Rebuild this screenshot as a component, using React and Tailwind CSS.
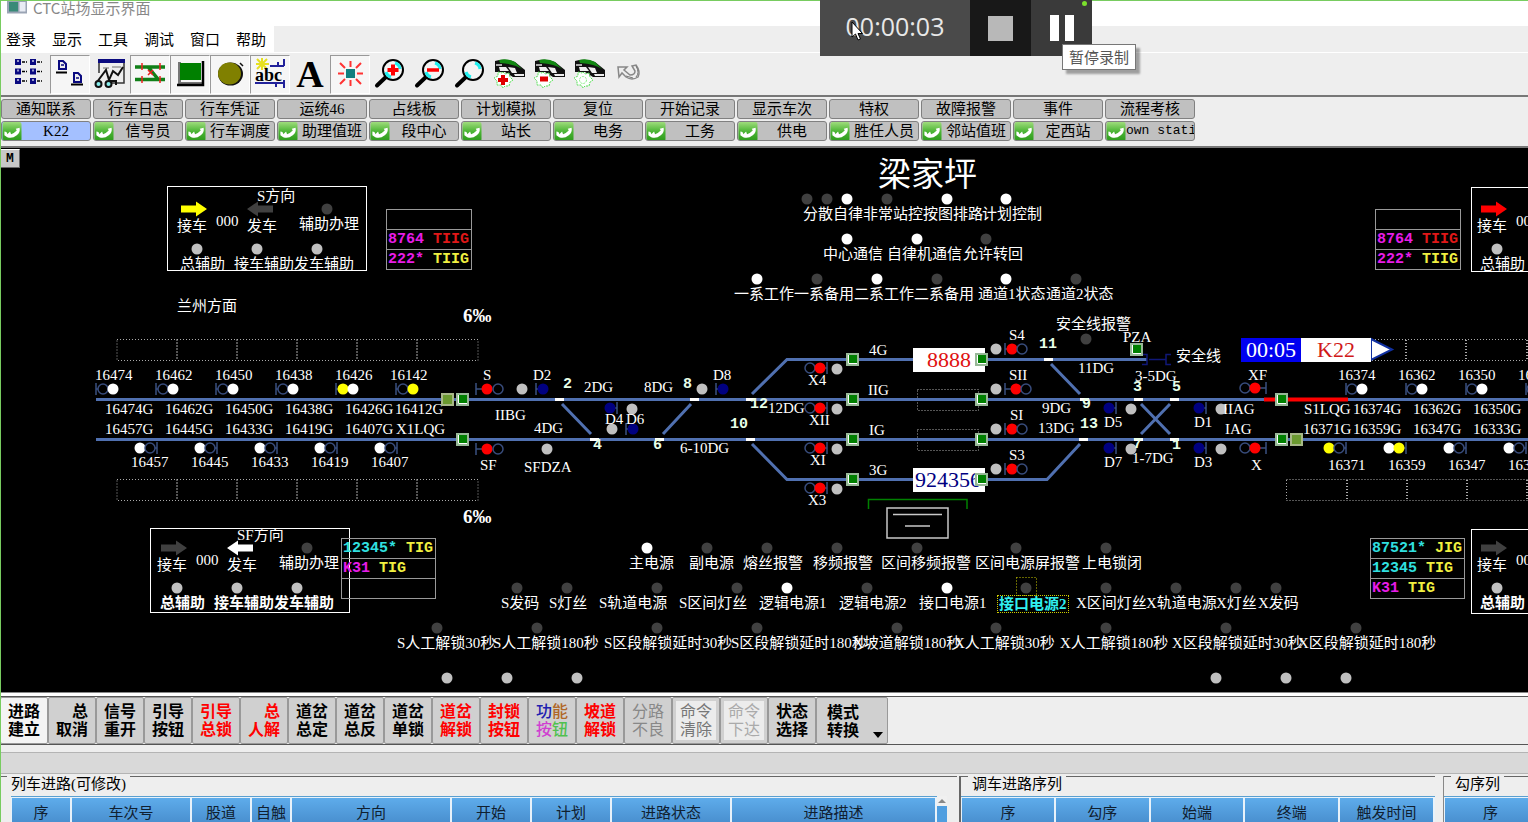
import React from "react";

const CJK = "font-['Liberation_Serif','Noto_Sans_CJK_SC',serif]";
const UI = "font-['Noto_Sans_CJK_SC',sans-serif]";

/* ---------- tool bar icons ---------- */

const Magnifier = ({ sign }) => (
  <svg viewBox="0 0 32 32" className="h-8 w-8">
    <path d="M13 18 3 27.500" stroke="#000" strokeWidth="4" strokeLinecap="round" />
    <circle cx="19" cy="12" r="10" fill="#f4f4f4" stroke="#000" strokeWidth="2" />
    <path d="M21 5a7 7 0 0 1 5 6M12 14a7 7 0 0 0 5 5" stroke="#2ee" strokeWidth="3" fill="none" />
    {sign === "+" && <path d="M19 6.500v11M13.500 12h11" stroke="#f00" strokeWidth="4" />}
    {sign === "-" && <path d="M13 12h12" stroke="#f00" strokeWidth="3.5" />}
  </svg>
);

const Train = ({ sign }) => (
  <svg viewBox="0 0 32 32" className="h-8 w-8">
    <path d="M1 3q10-3 20 1l10 8v7H19l-8-5H1z" fill="#111" />
    <path d="M5 2q9-2 16 2l7 7q-7-5-22-6z" fill="#118811" />
    <path d="M5 9h7l3 4H6zM14 9l7 1 2 5h-5zM20 16h10v2h-9z" fill="#eee" />
    <path d="M2 7h6" stroke="#aaa" strokeWidth="2" />
    <path d="m9 14 2 2 4-1 1 4 3 3-3 2-1 4-4 0-2 2-2-3-4 0v-4l-3-3 4-2v-4l4 1z" fill="#fff" stroke="#58e058" strokeDasharray="2 1" />
    {sign === "+" && <path d="M9 17v10M4 22h10" stroke="#e00000" strokeWidth="4" />}
    {sign === "-" && <path d="M6 21h8" stroke="#e00000" strokeWidth="5" />}
    {!sign && <circle cx="9" cy="22" r="3.5" fill="none" stroke="#8e8" strokeDasharray="2 1" />}
  </svg>
);

const toolIcons = [
  {
    name: "多站",
    art: (
      <svg viewBox="0 0 32 32" className="h-8 w-8">
        {[1, 10.5, 20].map((y) => (
          <g key={y}>
            <path d={`M1 ${y}h6v6h-6zM16 ${y}h6v6h-6z`} fill="#0a0a80" />
            <path d={`M3 ${y + 1}h2v2h-2zM18 ${y + 1}h2v2h-2z`} fill="#99c" />
            <path d={`M8 ${y + 3}h5M23 ${y + 3}h5`} stroke="#000" strokeWidth="1.5" strokeDasharray="3 1" />
          </g>
        ))}
      </svg>
    ),
  },
  {
    name: "单站",
    on: true,
    art: (
      <svg viewBox="0 0 32 32" className="h-8 w-8">
        <path d="M5 3h4l3 3v5H5zM20 15h4l3 3v6h-7z" fill="#eee" stroke="#0a0a80" strokeWidth="2" />
        <path d="M7 7h3M22 20h3" stroke="#0a0a80" strokeWidth="1.5" />
        <path d="M2 14.5h11M17 26.5h12" stroke="#000" strokeWidth="2" />
      </svg>
    ),
  },
  {
    name: "查看",
    art: (
      <svg viewBox="0 0 32 32" className="h-8 w-8">
        <path d="M5 3h25v22H14M5 3v12" fill="none" stroke="#333" strokeWidth="1.5" />
        <path d="M4 1h27v4H4z" fill="#0a0a80" />
        <path d="M9 10h6M18 9h9" stroke="#999" strokeWidth="1.5" />
        <path d="m3 24 9-12 3 10 4-9 5 4 5-8M14 23h8v4" fill="none" stroke="#111" strokeWidth="2" />
        <circle cx="4.500" cy="26" r="3" fill="#8ee" stroke="#111" strokeWidth="2" />
        <circle cx="14.500" cy="26" r="3" fill="#8ee" stroke="#111" strokeWidth="2" />
      </svg>
    ),
  },
  {
    name: "道岔",
    on: true,
    art: (
      <svg viewBox="0 0 32 32" className="h-8 w-8">
        <path d="M1 9h30M1 21.500h30M8 9h6l10 12" stroke="#118018" strokeWidth="3.500" fill="none" />
        <path d="M8 5v7M26 5v7M8 18v7M26 18v7M14 12l5 5M19 12l-5 5" stroke="#e22" strokeWidth="1.500" />
      </svg>
    ),
  },
  {
    name: "按钮",
    on: true,
    art: (
      <svg viewBox="0 0 32 32" className="h-8 w-8">
        <path d="M4 27V4h3v20h22v3z" fill="#777" />
        <path d="M29 3v24H3" fill="none" stroke="#000" strokeWidth="2.500" />
        <path d="M6 5h21v17H6z" fill="#008000" />
      </svg>
    ),
  },
  {
    name: "表示灯",
    on: true,
    art: (
      <svg viewBox="0 0 32 32" className="h-8 w-8">
        <ellipse cx="16.500" cy="16" rx="12.500" ry="11.500" fill="#111" />
        <ellipse cx="15.500" cy="15.500" rx="11.500" ry="11" fill="#808000" />
        <path d="M26 5l3 3" stroke="#111" strokeWidth="1.500" />
      </svg>
    ),
  },
  {
    name: "文字标注",
    on: true,
    art: (
      <span className="relative block h-8 w-8 overflow-hidden">
        <svg viewBox="0 0 32 32" className="absolute inset-0 h-8 w-8">
          <path d="M16 8h14M1 25h29M24 4v4M30 1v7M22 26v3M30 22v8" stroke="#22229a" strokeWidth="2" />
          <path d="M8 0v12M2 6h13M3 1l10 10M13 1 3 11" stroke="#e6e020" strokeWidth="2" />
        </svg>
        <span className="absolute left-px top-2 font-['Liberation_Serif',serif] text-[18px] font-bold leading-[18px] text-black">abc</span>
      </span>
    ),
  },
  {
    name: "字体",
    art: <span className="font-['Liberation_Serif',serif] text-[38px] font-bold leading-8 text-black">A</span>,
  },
  {
    name: "闪烁",
    on: true,
    art: (
      <svg viewBox="0 0 32 32" className="h-8 w-8">
        <path d="M12 11h9v9h-9z" fill="#108080" />
        <path d="M16.500 3v6M16.500 22v6M4 15.500h6M23 15.500h6M6 5l5 5M27 5l-5 5M6 26l5-5M27 26l-5-5" stroke="#f33" strokeWidth="2" />
      </svg>
    ),
  },
  { name: "放大", art: <Magnifier sign="+" /> },
  { name: "缩小", art: <Magnifier sign="-" /> },
  { name: "还原", art: <Magnifier /> },
  { name: "增加列车", art: <Train sign="+" /> },
  { name: "删除列车", art: <Train sign="-" /> },
  { name: "列车", art: <Train /> },
  {
    name: "撤销",
    art: (
      <svg viewBox="0 0 32 32" className="h-8 w-8">
        <path d="m4 9h9l-3 3 6 5q5 0 5-4l-3-5 4-1q5 7 2 12-6 4-12 0l-4-4-3 4z" fill="#eee" stroke="#888" strokeWidth="1.500" />
        <path d="m12 18 7 2M22 8q4 7 0 11" stroke="#777" fill="none" />
      </svg>
    ),
  },
];

const PhoneIcon = () => (
  <svg viewBox="0 0 20 20" className="h-[19px] w-5 shrink-0">
    <defs>
      <linearGradient id="phone" x1="0" y1="0" x2="0" y2="1">
        <stop offset="0" stopColor="#9fdc7c" />
        <stop offset="0.5" stopColor="#4cb535" />
        <stop offset="1" stopColor="#2c9a1c" />
      </linearGradient>
    </defs>
    <rect width="20" height="20" rx="2" fill="url(#phone)" />
    <path d="M2 10q3 0 3 3l3-3 1 3q3-1 6-4l-1-2 4-1q1 5-3 8-5 4-10 2l-3-2z" fill="#fff" />
  </svg>
);

const menus = ["登录", "显示", "工具", "调试", "窗口", "帮助"];
const rowOne = ["通知联系", "行车日志", "行车凭证", "运统46", "占线板", "计划模拟", "复位", "开始记录", "显示车次", "特权", "故障报警", "事件", "流程考核"];
const rowTwo = ["K22", "信号员", "行车调度", "助理值班", "段中心", "站长", "电务", "工务", "供电", "胜任人员", "邻站值班", "定西站", "own stati"];

/* ---------- station diagram ---------- */

// The diagram's own coordinate system starts at this y.
const TOP = 148;
const RAIL = "#5070b0";
const DIM = "#404040";
const GREY = "#c0c0c0";
const NAVY = "#000080";

const Text = ({ x, y, children, className = "text-[15px] text-white" }) => (
  <span className={`absolute whitespace-nowrap leading-5 ${className}`} style={{ left: x, top: y - TOP - 10 }}>
    {children}
  </span>
);

const labels = [
  ["兰州方面", 177, 306],
  ["16474", 95, 375], ["16462", 155, 375], ["16450", 215, 375], ["16438", 275, 375], ["16426", 335, 375], ["16142", 390, 375],
  ["16474G", 105, 409], ["16462G", 165, 409], ["16450G", 225, 409], ["16438G", 285, 409], ["16426G", 345, 409], ["16412G", 395, 409],
  ["16457G", 105, 429], ["16445G", 165, 429], ["16433G", 225, 429], ["16419G", 285, 429], ["16407G", 345, 429], ["X1LQG", 396, 429],
  ["16457", 131, 462], ["16445", 191, 462], ["16433", 251, 462], ["16419", 311, 462], ["16407", 371, 462],
  ["S", 483, 375], ["SF", 480, 465], ["D2", 533, 375], ["2DG", 584, 387], ["8DG", 644, 387], ["D8", 713, 375],
  ["IIBG", 495, 415], ["4DG", 534, 428], ["D4", 605, 419], ["D6", 626, 419], ["SFDZA", 524, 467], ["6-10DG", 680, 448],
  ["12DG", 768, 408], ["4G", 869, 350], ["IIG", 868, 390], ["IG", 869, 430], ["3G", 869, 470],
  ["X4", 808, 380], ["XII", 809, 420], ["XI", 810, 460], ["X3", 808, 500],
  ["S4", 1009, 335], ["SII", 1009, 375], ["SI", 1010, 415], ["S3", 1009, 455],
  ["安全线报警", 1056, 324], ["PZA", 1123, 337], ["安全线", 1176, 356], ["11DG", 1078, 368], ["9DG", 1042, 408], ["13DG", 1038, 428],
  ["3-5DG", 1135, 376], ["1-7DG", 1132, 458], ["D5", 1104, 422], ["D7", 1104, 462], ["D1", 1194, 422], ["D3", 1194, 462],
  ["IIAG", 1223, 409], ["IAG", 1225, 429], ["XF", 1248, 375], ["X", 1251, 465],
  ["16374", 1338, 375], ["16362", 1398, 375], ["16350", 1458, 375], ["16338", 1518, 375],
  ["S1LQG", 1304, 409], ["16374G", 1353, 409], ["16362G", 1413, 409], ["16350G", 1473, 409],
  ["16371G", 1303, 429], ["16359G", 1353, 429], ["16347G", 1413, 429], ["16333G", 1473, 429],
  ["16371", 1328, 465], ["16359", 1388, 465], ["16347", 1448, 465], ["16333", 1508, 465],
  ["分散自律", 803, 214], ["非常站控", 863, 214], ["按图排路", 923, 214], ["计划控制", 982, 214],
  ["中心通信", 823, 254], ["自律机通信", 887, 254], ["允许转回", 963, 254],
  ["一系工作", 734, 294], ["一系备用", 794, 294], ["二系工作", 854, 294], ["二系备用", 914, 294], ["通道1状态", 978, 294], ["通道2状态", 1046, 294],
  ["主电源", 629, 563], ["副电源", 689, 563], ["熔丝报警", 743, 563], ["移频报警", 813, 563], ["区间移频报警", 881, 563], ["区间电源屏报警", 975, 563], ["上电锁闭", 1082, 563],
  ["S发码", 501, 603], ["S灯丝", 549, 603], ["S轨道电源", 599, 603], ["S区间灯丝", 679, 603], ["逻辑电源1", 759, 603], ["逻辑电源2", 839, 603], ["接口电源1", 919, 603],
  ["X区间灯丝", 1076, 603], ["X轨道电源", 1146, 603], ["X灯丝", 1216, 603], ["X发码", 1258, 603],
  ["S人工解锁30秒", 397, 643], ["S人工解锁180秒", 493, 643], ["S区段解锁延时30秒", 604, 643], ["S区段解锁延时180秒", 731, 643],
  ["X坡道解锁180秒", 853, 643], ["X人工解锁30秒", 954, 643], ["X人工解锁180秒", 1060, 643], ["X区段解锁延时30秒", 1172, 643], ["X区段解锁延时180秒", 1298, 643],
];

const switches = [
  ["2", 563, 385], ["8", 683, 385], ["4", 593, 446], ["6", 653, 446], ["12", 750, 405], ["10", 730, 425],
  ["11", 1039, 345], ["9", 1082, 405], ["13", 1080, 425], ["3", 1133, 388], ["5", 1172, 388], ["7", 1133, 445], ["1", 1172, 446],
];

const lamps = [
  [GREY, 389, [522, 702, 996]], [GREY, 409, [632, 837, 1131, 1221]], [GREY, 429, [612, 996]], [GREY, 449, [547, 837, 1131, 1221]],
  [GREY, 369, [837]], [GREY, 489, [837]], [GREY, 349, [996]], [GREY, 469, [996]],
  [GREY, 678, [447, 507, 577, 1216, 1286, 1346]],
  [DIM, 199, [807, 827, 887]], ["#fff", 199, [847, 947, 1006]],
  ["#fff", 239, [847, 917]], [DIM, 239, [986]],
  ["#fff", 279, [757, 877, 1006]], [DIM, 279, [817, 937, 1076]],
  [DIM, 339, [1086]],
  ["#fff", 548, [647]], [DIM, 548, [707, 767, 837, 917, 1016, 1106]],
  [DIM, 588, [517, 567, 657, 737, 867, 1026, 1106, 1176, 1236, 1276]], ["#fff", 588, [787, 947]],
  [DIM, 628, [437, 537, 657, 757, 897, 996, 1106, 1226, 1356]],
];

// Each signal: y, bar x, then [x, colour] per light; no colour is an unlit ring.
const signals = [
  ...[96, 156, 216, 276].map((b) => [389, b, [b + 7], [b + 17, "#fff"]]),
  [389, 336, [343, "#ff0"], [353, "#fff"]],
  [389, 396, [403], [413, "#ff0"]],
  ...[157, 217, 277, 337, 397].map((b) => [448, b, [b - 17, "#fff"], [b - 7]]),
  [389, 476, [487, "#f00"], [498]], [449, 476, [487, "#f00"], [498]],
  [389, 536, [543, NAVY]], [389, 716, [723, NAVY]], [408, 617, [610, NAVY]], [429, 626, [633, NAVY]],
  ...[368, 408, 448, 488].map((y) => [y, 827, [810], [820, "#f00"]]),
  ...[349, 429, 469].map((y) => [y, 1005, [1012, "#f00"], [1022]]),
  [389, 1005, [1016, "#f00"], [1026]],
  ...[408, 448].flatMap((y) => [[y, 1116, [1109, NAVY]], [y, 1206, [1199, NAVY]]]),
  ...[388, 448].map((y) => [y, 1266, [1245], [1255, "#f00"]]),
  ...[1346, 1406, 1466, 1526].map((b) => [389, b, [b + 6], [b + 16, "#fff"]]),
  [448, 1346, [1329, "#ff0"], [1339]], [448, 1406, [1389, "#fff"], [1399, "#ff0"]],
  [448, 1466, [1449, "#fff"], [1459]], [448, 1526, [1509, "#fff"], [1519]],
];

const ticks = [
  [555, 399], [590, 439], [655, 439], [690, 399], [746, 399], [746, 439], [1044, 359], [1080, 399], [1079, 439],
  [1134, 399], [1170, 399], [1134, 439], [1170, 439],
];

const squares = [
  [447, 399, 1], [462, 399], [462, 439], [852, 359], [852, 399], [852, 439], [852, 479],
  [981, 359], [981, 399], [981, 439], [981, 479], [1136, 349], [1281, 399], [1281, 439], [1296, 439, 1],
];

const Tracks = () => (
  <svg width="1600" height="544" viewBox="0 148 1600 544" className="absolute left-0 top-0">
    <g fill="none" stroke="#aaa" strokeDasharray="1 2">
      {[339.5, 479.5].map((y) => (
        <g key={y}>
          <path d={`M117 ${y}h361v21h-361z`} />
          {[177, 237, 297, 357, 417].map((x) => <path key={x} strokeWidth="2" d={`M${x} ${y}v21`} />)}
        </g>
      ))}
      <path d="M1372 339.500h228M1372 360.500h228M1286.500 479.500H1600M1286.500 500.500H1600M1286.500 480v20" />
      {[1406, 1466, 1527].map((x) => <path key={x} strokeWidth="2" d={`M${x} 340v20`} />)}
      {[1347, 1407, 1467, 1527].map((x) => <path key={x} strokeWidth="2" d={`M${x} 480v20`} />)}
      <path d="M917.500 389.500h61v21h-61zM917.500 429.500h61v21h-61z" />
    </g>
    <g fill="none" stroke={RAIL} strokeWidth="3">
      <path d="M96 399.500H1600M96 439.500H1600" />
      <path d="M752 394 787 359.500H1147M752 444l35 35.500H1047L1080 444" />
      <path d="M562 404l29 30M691 404l-28 30M1051 364l29 30M1141 404l29 30M1170 404l-29 30" />
    </g>
    <path d="M1264 399.500h84" stroke="#f00" strokeWidth="4" />
    <path d="M1142 354.500h5v10h-5M1149 359.500h17M1171 354.500h-5v10h5" fill="none" stroke="#101878" strokeWidth="1.500" />
    {ticks.map(([x, y]) => <rect key={`${x}-${y}`} x={x} y={y - 1} width="9" height="3" fill="#fff" />)}
    {signals.map(([y, bar, ...lights]) => (
      <g key={`${bar}-${y}`}>
        <path d={`M${bar} ${y - 6}v12M${bar} ${y}H${lights.reduce((a, l) => (Math.abs(l[0] - bar) < Math.abs(a - bar) ? l[0] : a), 9999)}`} stroke="#3a5080" strokeWidth="1.500" />
        {lights.map(([x, c]) => <circle key={x} cx={x} cy={y} r={c ? 5.5 : 5} fill={c || "#000"} stroke={c ? "none" : "#384c7c"} strokeWidth="1.500" />)}
      </g>
    ))}
    {lamps.map(([c, y, xs]) => xs.map((x) => <circle key={`${x}-${y}`} cx={x} cy={y} r="5.5" fill={c} />))}
    <path d="M868.500 509v-9.500h98.500v9.500" fill="none" stroke="#008000" strokeWidth="1.500" />
    <path d="M887 508h61v30h-61z" fill="none" stroke="#c8c8c8" strokeWidth="1.500" />
    <path d="M893 514.500h49M905 526h25" stroke="#c8c8c8" strokeWidth="1.500" />
    <path d="M1371 339l21 10.500-21 10.500z" fill="#fff" stroke="#1030a0" strokeWidth="2" />
    <path d="M1016.500 577.500h20v18h-20z" fill="none" stroke="#cc0" strokeDasharray="1 2" />
  </svg>
);

const Squares = () => (
  <svg width="1600" height="544" viewBox="0 148 1600 544" className="absolute left-0 top-0">
    {squares.map(([x, y, olive]) => (
      <g key={`${x}-${y}`}>
        <rect x={x - 5} y={y - 5} width="11" height="11" fill={olive ? "#6b9a30" : "#008000"} stroke={olive ? "#a8b888" : "#98b898"} strokeWidth="2" />
        {!olive && <path d={`M${x - 3.5} ${y - 4}v8.500h8.500`} fill="none" stroke="#fff" />}
      </g>
    ))}
  </svg>
);

const Direction = ({ x, y, title, dx = 0, dy = 0, receive, depart, bold }) => {
  const at = (left, cy) => ({ left: left + dx, top: cy - 10 + dy });
  const t = "absolute whitespace-nowrap leading-5";
  return (
    <div className="absolute h-[85px] w-[200px] overflow-hidden border border-white text-[15px] text-white" style={{ left: x, top: y - TOP }}>
      <svg width="200" height="84" className="absolute left-0 top-0">
        <g transform={`translate(${dx} ${dy})`}>
          <path d="M13 18.500h15v-4l11 7.500-11 7.500v-4H13z" fill={receive} />
          <path d="M105 18.500H90v-4L79 22l11 7.500v-4h15z" fill={depart} />
          <circle cx="159" cy="22" r="5.500" fill={DIM} />
          {[29, 89, 149].map((cx) => <circle key={cx} cx={cx} cy="62" r="5.500" fill={GREY} />)}
        </g>
      </svg>
      <span className={t} style={at(89, 9)}>{title}</span>
      <span className={t} style={at(9, 39)}>接车</span>
      <span className={t} style={at(48, 34)}>000</span>
      <span className={t} style={at(79, 39)}>发车</span>
      <span className={t} style={at(131, 37)}>辅助办理</span>
      <span className={`${t} ${bold ? "font-bold" : ""}`} style={at(12, 77)}>总辅助</span>
      <span className={`${t} ${bold ? "font-bold" : ""}`} style={at(66, 77)}>接车辅助</span>
      <span className={`${t} ${bold ? "font-bold" : ""}`} style={at(126, 77)}>发车辅助</span>
    </div>
  );
};

const M = "text-[#e81ce8]";
const C = "text-[#30e0e0]";
const Y = "text-[#f0f040]";
const R = "text-[#e01818]";

const TrainQueue = ({ x, y, wide, rows }) => (
  <table
    className={`absolute border-collapse font-['Liberation_Mono',monospace] text-[15px] font-bold ${wide ? "w-[95px]" : "w-[86px]"}`}
    style={{ left: x, top: y - TOP }}
  >
    <tbody>
      {rows.map((r, i) => (
        <tr key={i} className="h-5">
          <td className="whitespace-pre border border-[#999] p-0 pl-px leading-[19px]">
            {r && <><span className={r[1]}>{r[0]}</span> <span className={r[3]}>{r[2]}</span></>}
          </td>
        </tr>
      ))}
    </tbody>
  </table>
);

const Station = () => (
  <main className={`relative min-h-[544px] flex-1 overflow-hidden bg-black ${CJK}`}>
    <Tracks />
    <h1 className="absolute left-[878px] top-1 whitespace-nowrap text-[33px] leading-[46px] text-white">梁家坪</h1>
    <button className="absolute left-0 top-px h-[19px] w-5 border border-white border-b-[#666] border-r-[#666] bg-[#c8c8c8] font-['Liberation_Mono',monospace] text-[13px] font-bold leading-none text-black">M</button>
    {labels.map(([t, x, y]) => <Text key={`${t}-${x}`} x={x} y={y}>{t}</Text>)}
    {switches.map(([t, x, y]) => (
      <Text key={t} x={x} y={y} className="font-['Liberation_Mono',monospace] text-[15px] font-bold text-[#e8ffe8]">{t}</Text>
    ))}
    <Text x={463} y={316} className="text-[19px] font-bold text-white">6‰</Text>
    <Text x={463} y={517} className="text-[19px] font-bold text-white">6‰</Text>
    <span className="absolute left-[997px] top-[447px] whitespace-nowrap border border-dotted border-[#cc0] px-px text-[15px] font-bold leading-4 text-[#30f0f0]">接口电源2</span>

    <span className="absolute left-[913px] top-[200px] h-6 w-[72px] bg-white text-center text-[22px] leading-6 text-[#e01010]">8888</span>
    <span className="absolute left-[913px] top-[320px] h-6 w-[72px] bg-white pl-0.5 text-[22px] leading-6 text-[#000080]">924356</span>
    <div className="absolute left-[1241px] top-[190px] flex h-6 text-[22px] leading-6">
      <span className="w-[60px] bg-[#0000f0] text-center text-white">00:05</span>
      <span className="w-[70px] bg-white text-center text-[#d01818]">K22</span>
    </div>
    <Squares />

    <Direction x={167} y={186} title="S方向" receive="#ff0" depart={DIM} />
    <Direction x={150} y={528} dx={-3} dy={-3} title="SF方向" receive={DIM} depart="#fff" bold />
    <Direction x={1471} y={187} dx={-4} dy={-1} title="X方向" receive="#f00" depart={DIM} />
    <Direction x={1471} y={529} dx={-4} dy={-4} title="XF方向" receive={DIM} depart="#fff" bold />

    <TrainQueue x={386} y={209} rows={[null, ["8764", M, "TIIG", R], ["222*", M, "TIIG", Y]]} />
    <TrainQueue x={1375} y={209} rows={[null, ["8764", M, "TIIG", R], ["222*", M, "TIIG", Y]]} />
    <TrainQueue x={341} y={538} wide rows={[["12345*", C, "TIG", Y], ["K31", M, "TIG", Y], null]} />
    <TrainQueue x={1370} y={538} wide rows={[["87521*", C, "JIG", Y], ["12345", C, "TIG", Y], ["K31", M, "TIG", Y]]} />
  </main>
);

/* ---------- command bar and lists ---------- */

const commands = [
  ["进路", "建立", "bg-[#f4f4f4]"], ["\u3000总", "取消"], ["信号", "重开"], ["引导", "按钮"],
  ["引导", "总锁", "text-[#f00]"], ["\u3000总", "人解", "text-[#f00]"], ["道岔", "总定"], ["道岔", "总反"], ["道岔", "单锁"],
  ["道岔", "解锁", "text-[#f00]"], ["封锁", "按钮", "text-[#f00]"], ["功能", "按钮", "multi"], ["坡道", "解锁", "text-[#f00]"],
  ["分路", "不良", "font-normal text-[#888]"],
  ["命令", "清除", "font-normal text-[#777] shadow-[inset_0_0_0_3px_#d0d0d0] bg-[#ececec]"],
  ["命令", "下达", "font-normal text-[#aaa] shadow-[inset_0_0_0_3px_#d0d0d0] bg-[#ececec]"],
  ["状态", "选择"],
];

const CommandBar = () => (
  <div className="flex h-12 items-stretch border-t border-[#555] bg-[#eee]">
    {commands.map(([a, b, c = ""], i) => (
      <button
        key={i}
        className={`w-12 whitespace-pre rounded-[2px] border border-[#999] pb-[3px] text-[16px] leading-[18px] ${c.includes("font-normal") ? "" : "font-bold"} ${c.includes("bg-") ? "" : "bg-[#d0d0d0]"} ${c} ${UI}`}
      >
        {c === "multi" ? (
          <>
            <span className="block font-medium"><span className="text-[#2020b0]">功</span><span className="text-[#b06828]">能</span></span>
            <span className="block font-medium"><span className="text-[#d040d0]">按</span><span className="text-[#50c050]">钮</span></span>
          </>
        ) : (
          <><span className="block">{a}</span><span className="block">{b}</span></>
        )}
      </button>
    ))}
    <button className={`flex w-[72px] items-end justify-between rounded-[2px] border border-[#999] bg-[#d0d0d0] pb-[5px] pl-[10px] pr-1 text-[16px] font-bold leading-[18px] ${UI}`}>
      <span>模式<br />转换</span>
      <svg viewBox="0 0 10 6" className="h-1.5 w-2.5"><path d="M0 0h10L5 6z" /></svg>
    </button>
  </div>
);

const List = ({ title, cols, scroll, className = "" }) => (
  <section className={`overflow-hidden ${className}`}>
    <div className="flex h-5 items-start">
      <span className="w-[7px] border-t border-[#666]" />
      <h2 className={`whitespace-nowrap px-1 text-[15px] leading-4 text-black ${CJK}`}>{title}</h2>
      <span className="flex-1 border-t border-[#666]" />
    </div>
    <div className={scroll ? "flex pl-[11px] pr-2.5" : "flex"}>
      <table className="flex-1 table-fixed border-separate border-spacing-0 border-t border-t-[#5a9fd0]">
        <thead>
          <tr>
            {cols.map(([name, w]) => (
              <th
                key={name}
                style={{ width: w }}
                className={`h-8 border-r-2 border-t border-[#e8f2fa] bg-linear-to-b from-[#5eaceb] to-[#4488c8] p-0 pb-0.5 text-[15px] font-normal text-[#102030] first:border-l ${UI}`}
              >
                {name}
              </th>
            ))}
          </tr>
        </thead>
      </table>
      {scroll && (
        <div className="w-2.5 bg-[#4f9ee0]">
          <svg viewBox="0 0 10 10" className="block h-2.5 w-2.5 bg-[#f0f0f0]"><path d="M1 7h8L5 3z" fill="#888" /></svg>
        </div>
      )}
    </div>
  </section>
);

export default function App() {
  return (
    <div className="relative flex max-h-screen min-h-screen flex-col overflow-hidden bg-[#eee] text-black">
      <header className={UI}>
        <div className="flex h-[26px] items-start gap-1.5 bg-white pl-[7px]">
          <svg viewBox="0 0 20 14" className="h-3.5 w-5">
            <path d="M0 0h20v13.500H0z" fill="#9aa4b4" />
            <path d="M2 2h9v9.500H2z" fill="#3a8a78" />
            <path d="M12.500 2h6v9.500h-6z" fill="#e8ecf4" />
          </svg>
          <span className="whitespace-nowrap text-[15px] leading-[15px] text-[#888]">CTC站场显示界面</span>
        </div>
        <nav className="flex h-[26px] w-[274px] bg-white pl-1.5">
          {menus.map((m) => (
            <button key={m} className="w-[46px] shrink-0 text-left text-[15px] leading-[26px]">{m}</button>
          ))}
        </nav>
        <div className="flex h-[43px] items-center border-t border-white pl-2.5">
          {toolIcons.map(({ name, on, art }) => (
            <button
              key={name}
              aria-label={name}
              className={`flex h-[39px] w-10 items-center justify-center border ${on ? "border-[#999] border-b-white border-r-white bg-[#f6f6f6]" : "border-transparent"}`}
            >
              {art}
            </button>
          ))}
        </div>
      </header>

      <div className={`flex h-[53px] flex-col gap-0.5 overflow-hidden border-b-2 border-t-2 border-[#777] pl-px pt-0.5 text-[15px] ${CJK}`}>
        <div className="flex gap-0.5">
          {rowOne.map((t) => (
            <button key={t} className="h-5 w-[90px] shrink-0 rounded-[3px] border border-[#808080] bg-[#c0c0c0] leading-[18px]">{t}</button>
          ))}
        </div>
        <div className="flex gap-0.5">
          {rowTwo.map((t, i) => (
            <button
              key={t}
              className={`flex h-5 w-[90px] shrink-0 items-center overflow-hidden rounded-[3px] border border-[#808080] leading-[18px] ${i === 0 ? "bg-[#a4c0ff]" : "bg-[#c0c0c0]"}`}
            >
              <PhoneIcon />
              <span className={`flex-1 whitespace-nowrap text-center ${i === 12 ? "font-['Liberation_Mono',monospace] text-[13px]" : ""}`}>{t}</span>
            </button>
          ))}
        </div>
      </div>

      <Station />

      <footer>
        <div className="h-1 border-t border-[#888] bg-white" />
        <CommandBar />
        <div className="h-2 border-t border-[#555]" />
        <div className="h-[22px] border-y border-[#b4b4b4] bg-[#d9d9d9]" />
        <div className="mt-0.5 flex h-[46px] overflow-hidden">
          <List
            title="列车进路(可修改)"
            scroll
            className="min-w-0 flex-1"
            cols={[["序", "61px"], ["车次号", "120px"], ["股道", "60px"], ["自触", "40px"], ["方向", "160px"], ["开始", "80px"], ["计划", "80px"], ["进路状态", "120px"], ["进路描述", "auto"]]}
          />
          <List
            title="调车进路序列"
            className="ml-0.5 w-[476px] shrink-0 border-l-2 border-[#666]"
            cols={[["序", "20%"], ["勾序", "20%"], ["始端", "20%"], ["终端", "20%"], ["触发时间", "20%"]]}
          />
          <List title="勾序列" className="-mr-2.5 ml-2 w-[95px] shrink-0 border-l border-[#888]" cols={[["序", "100%"]]} />
        </div>
      </footer>

      <div className="pointer-events-none absolute inset-0 border-l border-t border-[#78cc60]" />

      <div className="absolute left-[820px] top-0 flex h-14">
        <div className="flex w-[150px] items-center justify-center bg-[#4a4a4a] pb-1 font-['Open_Sans',sans-serif] text-[25px] leading-none text-[#e8e8e8]">00:00:03</div>
        <button aria-label="停止" className="flex w-[61px] items-center justify-center bg-[#181818]"><span className="h-[25px] w-[25px] bg-[#b8b8b8]" /></button>
        <button aria-label="暂停" className="relative flex w-[61px] items-center justify-center gap-1.5 bg-[#3a3a3a]">
          <span className="h-[26px] w-[9px] bg-white" />
          <span className="h-[26px] w-[9px] bg-white" />
          <span className="absolute right-[5px] top-px h-[5px] w-[5px] rounded-full bg-[#7be02c]" />
        </button>
      </div>
      <svg viewBox="0 0 12 20" className="absolute left-[851px] top-[21px] h-5 w-3">
        <path d="M1 1v15l3.500-3 2.500 6 2.500-1L7 12.500h4.500z" fill="#fff" stroke="#000" />
      </svg>
      <div role="tooltip" className={`absolute left-[1062px] top-11 border border-[#777] bg-white px-1.5 text-[15px] leading-6 text-[#555] shadow-[4px_4px_2px_#00000055] ${UI}`}>暂停录制</div>
    </div>
  );
}
